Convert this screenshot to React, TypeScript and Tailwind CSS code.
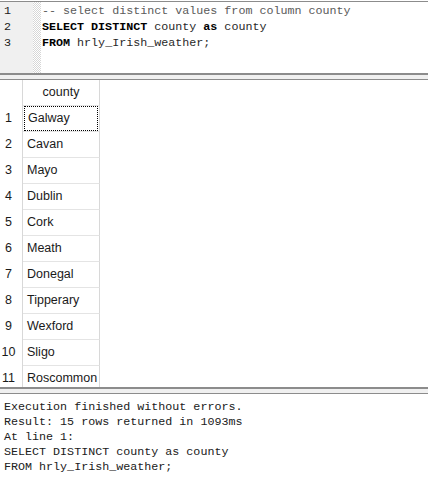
import React from 'react';

const counties = [
  'Galway',
  'Cavan',
  'Mayo',
  'Dublin',
  'Cork',
  'Meath',
  'Donegal',
  'Tipperary',
  'Wexford',
  'Sligo',
  'Roscommon',
];

const mono = "font-['Liberation_Mono','Courier_New',monospace]";
const sans = "font-['Liberation_Sans',Arial,sans-serif]";

function Splitter() {
  return (
    <div className="border-t-2 border-b border-t-[#8c8c8c] border-b-[#8c8c8c] bg-[#f0f0f0] h-[7px]" />
  );
}

export default function App() {
  return (
    <div className="w-[428px] h-[478px] overflow-hidden bg-white">
      {/* editor */}
      <div className={`flex h-[72px] border-t border-[#8c8c8c] mt-px ${mono} text-[11.7px] leading-[16px]`}>
        <div className="w-[33px] bg-[#f0f0f0] text-[#202020] pl-[4px] pt-px">
          <div>1</div>
          <div>2</div>
          <div>3</div>
        </div>
        <div className="w-[8px] bg-[repeating-conic-gradient(#d6d6d6_0%_25%,#ffffff_0%_50%)] bg-[length:2px_2px]" />
        <div className="flex-1 pl-px pt-px text-[#282828] whitespace-pre">
          <div className="text-[#5a5a5a]">-- select distinct values from column county</div>
          <div>
            <span className="font-bold text-black">SELECT DISTINCT</span> county <span className="font-bold text-black">as</span> county
          </div>
          <div>
            <span className="font-bold text-black">FROM</span> hrly_Irish_weather;
          </div>
        </div>
      </div>
      <Splitter />

      {/* results grid */}
      <div className={`h-[307px] overflow-hidden ${sans} text-[12.5px] text-[#1a1a1a]`}>
        <div className="flex h-[25px] items-center">
          <div className="w-[23px] h-full border-r border-[#d8d8d8]" />
          <div className="w-[77px] h-full flex items-center justify-center border-r border-[#d8d8d8]">county</div>
        </div>
        {counties.map((c, i) => (
          <div key={c} className="flex h-[26px]">
            <div className="w-[23px] h-full flex items-center justify-center pr-[5px] border-r border-[#d8d8d8]">
              {i + 1}
            </div>
            <div className="w-[77px] h-full border-r border-t border-[#e4e4e4] border-r-[#d8d8d8]">
              <div
                className={`h-full flex items-center pl-[3px] ${
                  i === 0 ? 'border border-dotted border-black ml-px mr-px' : 'pl-[4px]'
                }`}
              >
                {c}
              </div>
            </div>
          </div>
        ))}
      </div>
      <Splitter />

      {/* output */}
      <div className={`pt-[6px] pl-[4px] ${mono} text-[11.7px] leading-[15px] text-[#202020] whitespace-pre`}>
        <div>Execution finished without errors.</div>
        <div>Result: 15 rows returned in 1093ms</div>
        <div>At line 1:</div>
        <div>SELECT DISTINCT county as county</div>
        <div>FROM hrly_Irish_weather;</div>
      </div>
    </div>
  );
}
